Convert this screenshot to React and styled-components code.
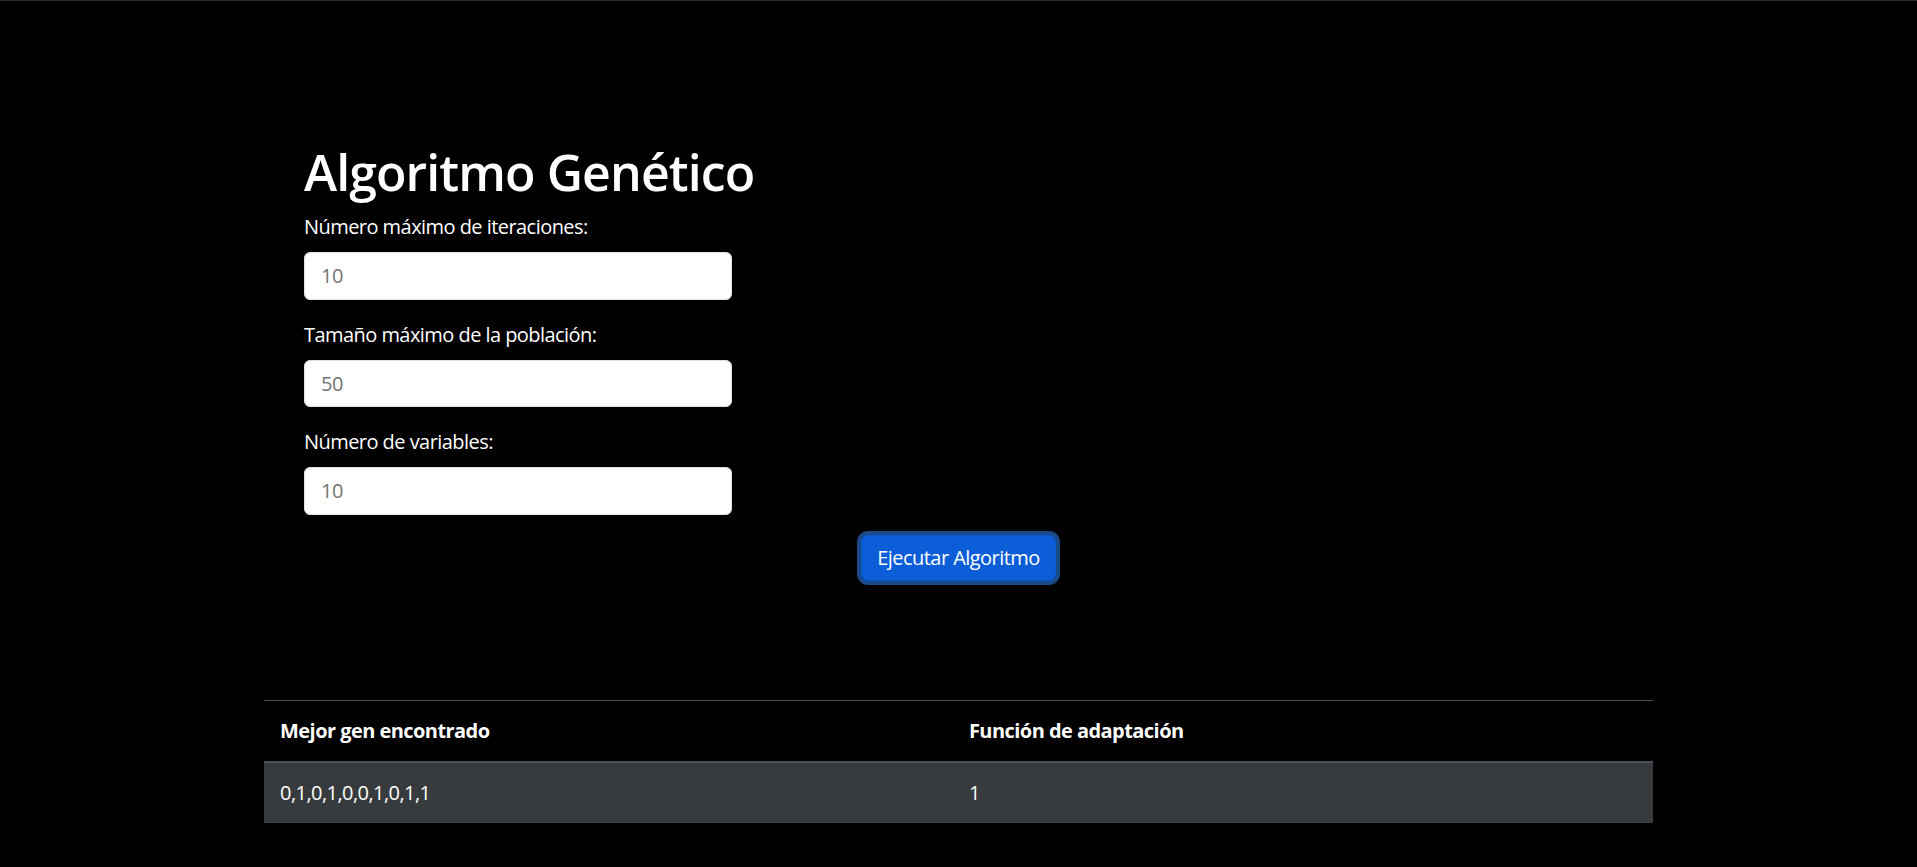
import React from "react";
import styled, { createGlobalStyle } from "styled-components";

const GlobalStyle = createGlobalStyle`
	html, body {
		margin: 0;
		padding: 0;
		background: #000;
	}
	body {
		font-family: "Open Sans", "Noto Sans", "Liberation Sans", sans-serif;
		color: #fff;
		font-size: 20px;
		line-height: 1.5;
		letter-spacing: -0.55px;
	}
	* {
		box-sizing: border-box;
	}
`;

const Page = styled.div`
	min-height: 867px;
	border-top: 1px solid #2b2b2b;
`;

const Wrapper = styled.main`
	width: 1389px;
	margin: 0 auto;
	padding-top: 141px;
`;

const Form = styled.form`
	display: flex;
	flex-direction: column;
	padding-left: 40px;
`;

const Title = styled.h1`
	margin: 0 0 10px;
	font-size: 50px;
	font-weight: 600;
	line-height: 1.2;
	letter-spacing: -0.9px;
`;

const Group = styled.div`
	display: flex;
	flex-direction: column;
	margin-bottom: 20px;
`;

const Label = styled.label`
	margin-bottom: 10px;
	font-size: 20px;
	line-height: 30px;
`;

const Input = styled.input`
	width: 428px;
	height: 47.5px;
	padding: 0 16px;
	font-family: inherit;
	font-size: 20px;
	letter-spacing: inherit;
	color: #6c757d;
	background: #fff;
	border: 1px solid #dee2e6;
	border-radius: 6px;
	outline: none;
`;

const Actions = styled.div`
	display: flex;
	justify-content: center;
	margin-left: -40px;
`;

const Button = styled.button`
	height: 46px;
	padding: 0 15px;
	font-family: inherit;
	font-size: 20px;
	letter-spacing: inherit;
	color: #fff;
	background: #0b5ed7;
	border: 1px solid #0a58ca;
	border-radius: 7px;
	box-shadow: 0 0 0 4px #1a4a88;
	cursor: pointer;
`;

const Table = styled.table`
	width: 100%;
	margin-top: 119px;
	border-collapse: collapse;
	border-top: 1px solid #4d5154;
`;

const HeadCell = styled.th`
	padding: 15px 16px;
	text-align: left;
	font-weight: 700;
	font-size: 20px;
	line-height: 30px;
	border-bottom: 2px solid #4b5157;
	width: ${({ $w }) => $w};
`;

const Cell = styled.td`
	padding: 15px 16px;
	font-size: 20px;
	line-height: 30px;
	background: #373b3e;
`;

export default function App() {
	const fields = [
		{ id: "iter", label: "Número máximo de iteraciones:", value: "10" },
		{ id: "pop", label: "Tamaño máximo de la población:", value: "50" },
		{ id: "vars", label: "Número de variables:", value: "10" },
	];
	return (
		<Page>
			<GlobalStyle />
			<Wrapper>
				<Form onSubmit={(e) => e.preventDefault()}>
					<Title>Algoritmo Genético</Title>
					{fields.map((f) => (
						<Group key={f.id}>
							<Label htmlFor={f.id}>{f.label}</Label>
							<Input id={f.id} placeholder={f.value} />
						</Group>
					))}
					<Actions>
						<Button type="submit">Ejecutar Algoritmo</Button>
					</Actions>
				</Form>
				<Table>
					<thead>
						<tr>
							<HeadCell $w="49.6%">Mejor gen encontrado</HeadCell>
							<HeadCell>Función de adaptación</HeadCell>
						</tr>
					</thead>
					<tbody>
						<tr>
							<Cell>0,1,0,1,0,0,1,0,1,1</Cell>
							<Cell>1</Cell>
						</tr>
					</tbody>
				</Table>
			</Wrapper>
		</Page>
	);
}
